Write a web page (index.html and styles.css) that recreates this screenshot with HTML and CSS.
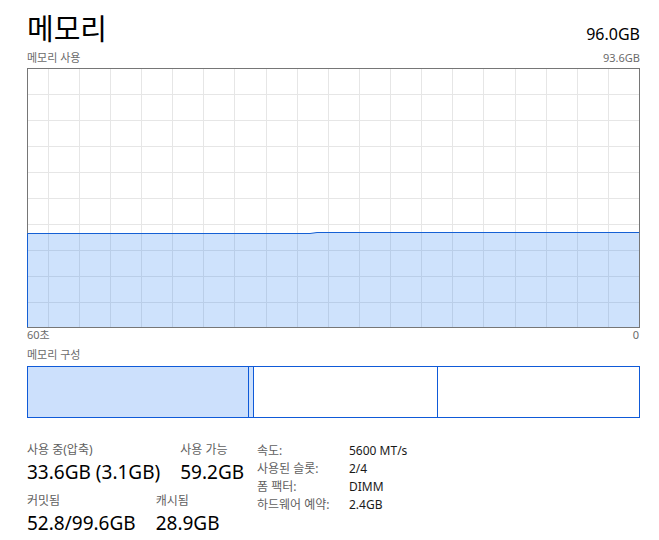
FILE: index.html
```html
<!DOCTYPE html>
<html lang="ko">
<head>
  <meta charset="UTF-8" />
  <meta name="viewport" content="width=device-width, initial-scale=1.0"/>
  <title>메모리</title>
  <link rel="stylesheet" href="styles.css">
</head>
<body>

<div class="page">
  <div class="head">
    <h1 class="title">메모리</h1>
    <span class="total">96.0GB</span>
  </div>

  <div class="caption">
    <span>메모리 사용</span>
    <span>93.6GB</span>
  </div>

  <svg class="chart" width="613" height="260" viewBox="0 0 613 260">
    <rect x="0.5" y="0.5" width="612" height="259" fill="#fff" stroke="#767676"/>
    <path class="grid" d="M21.5 1V259M52.5 1V259M83.5 1V259M114.5 1V259M145.5 1V259M176.5 1V259M207.5 1V259M239.5 1V259M270.5 1V259M301.5 1V259M332.5 1V259M363.5 1V259M394.5 1V259M425.5 1V259M456.5 1V259M488.5 1V259M519.5 1V259M550.5 1V259M581.5 1V259M1 26.5H612M1 52.5H612M1 78.5H612M1 104.5H612M1 130.5H612M1 156.5H612M1 182.5H612M1 208.5H612M1 234.5H612"/>
    <polygon class="area" points="1,165.5 283,165.5 290,164.5 612,164.5 612,259 1,259"/>
    <polyline class="line" points="0.5,259 0.5,165.5 283,165.5 290,164.5 612,164.5"/>
  </svg>

  <div class="axis">
    <span>60초</span>
    <span>0</span>
  </div>

  <div class="caption section">
    <span>메모리 구성</span>
  </div>

  <div class="compose">
    <div class="seg used"></div>
    <div class="seg modified"></div>
    <div class="seg standby"></div>
    <div class="seg free"></div>
  </div>

  <div class="stats">
    <div class="stats-left">
      <div class="stat-row">
        <div class="stat">
          <div class="label">사용 중(압축)</div>
          <div class="value">33.6GB (3.1GB)</div>
        </div>
        <div class="stat">
          <div class="label">사용 가능</div>
          <div class="value">59.2GB</div>
        </div>
      </div>
      <div class="stat-row">
        <div class="stat">
          <div class="label">커밋됨</div>
          <div class="value">52.8/99.6GB</div>
        </div>
        <div class="stat">
          <div class="label">캐시됨</div>
          <div class="value">28.9GB</div>
        </div>
      </div>
    </div>

    <dl class="specs">
      <dt>속도:</dt><dd>5600 MT/s</dd>
      <dt>사용된 슬롯:</dt><dd>2/4</dd>
      <dt>폼 팩터:</dt><dd>DIMM</dd>
      <dt>하드웨어 예약:</dt><dd>2.4GB</dd>
    </dl>
  </div>
</div>

</body>
</html>
```

FILE: styles.css
```css
body {
  margin: 0;
  background: #fff;
  color: #1a1a1a;
  font-family: "Noto Sans", "Noto Sans CJK KR", sans-serif;
}
.page { width: 613px; padding: 11px 0 0 27px; }

.head { display: flex; justify-content: space-between; align-items: baseline; }
.title { margin: 0; font-size: 29px; line-height: 36px; font-weight: normal; color: #000; }
.total { font-size: 16px; color: #000; }

.caption {
  display: flex; justify-content: space-between;
  margin-top: 4px; font-size: 11px; line-height: 14px; color: #6b6b6b;
}
.caption.section { margin-top: 6px; }

.chart { display: block; margin-top: 3px; }
.chart .grid { stroke: #e6e6e6; stroke-width: 1; fill: none; }
.chart .area { fill: #0a6cf0; fill-opacity: 0.2; }
.chart .line { fill: none; stroke: #1560d4; stroke-width: 1; }

.axis {
  display: flex; justify-content: space-between;
  padding-right: 1px; font-size: 11px; line-height: 14px; color: #6b6b6b;
}

.compose {
  display: flex; height: 52px; margin-top: 4px;
  border: 1px solid #0f5ad8; box-sizing: border-box;
}
.seg { height: 100%; }
.seg + .seg { border-left: 1px solid #0f5ad8; }
.used { width: 220px; background: #cce0fc; }
.modified { width: 4px; background: #cce0fc; }
.standby { width: 183px; }
.free { flex: 1; }

.stats { display: flex; align-items: flex-start; margin-top: 24px; }
.stats-left { width: 230px; }
.stat-row { display: flex; gap: 20px; }
.stat-row + .stat-row { margin-top: 9px; }
.label { font-size: 12px; line-height: 16px; color: #5f5f5f; }
.value { margin-top: 2px; font-size: 19px; line-height: 24px; color: #000; }

.specs {
  display: grid; grid-template-columns: 92px auto;
  margin: 0; font-size: 12px; line-height: 18px;
}
.specs dt { color: #5f5f5f; }
.specs dd { margin: 0; color: #1a1a1a; }
```
